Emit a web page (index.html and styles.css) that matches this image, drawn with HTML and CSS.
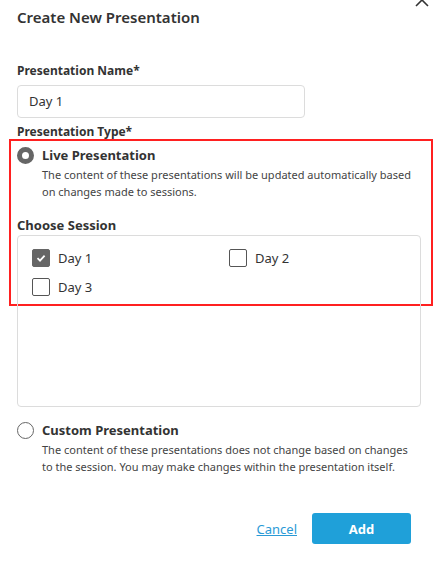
FILE: index.html
```html
<!DOCTYPE html>
<html>
<head>
<meta charset="utf-8">
<link rel="stylesheet" href="styles.css">
</head>
<body>
<div class="modal">
  <button class="close" aria-label="Close">
    <svg width="14" height="14" viewBox="0 0 14 14"><path d="M1 1L13 13M13 1L1 13" stroke="#333" stroke-width="1.6" fill="none"/></svg>
  </button>
  <h1 class="title">Create New Presentation</h1>

  <label class="field-label">Presentation Name*</label>
  <div class="input">Day 1</div>

  <div class="field-label type-label">Presentation Type*</div>

  <div class="highlight">
    <div class="option">
      <span class="radio radio-on"></span>
      <div class="option-body">
        <div class="option-title">Live Presentation</div>
        <div class="option-desc">The content of these presentations will be updated automatically based on changes made to sessions.</div>
      </div>
    </div>
    <div class="session-label">Choose Session</div>
  </div>

  <div class="sessions">
    <label class="check"><span class="box box-on"><svg width="12" height="12" viewBox="0 0 12 12"><path d="M2.5 6.2L5 8.6L9.6 3.6" stroke="#fff" stroke-width="1.8" fill="none"/></svg></span>Day 1</label>
    <label class="check"><span class="box"></span>Day 2</label>
    <label class="check"><span class="box"></span>Day 3</label>
  </div>

  <div class="option custom">
    <span class="radio"></span>
    <div class="option-body">
      <div class="option-title">Custom Presentation</div>
      <div class="option-desc">The content of these presentations does not change based on changes to the session. You may make changes within the presentation itself.</div>
    </div>
  </div>

  <div class="actions">
    <a class="cancel" href="#">Cancel</a>
    <button class="add">Add</button>
  </div>
</div>
<div class="footer-fade"></div>
</body>
</html>
```
FILE: styles.css
```css
html, body {
  margin: 0;
  padding: 0;
  background: #fff;
  font-family: "Noto Sans", "Open Sans", sans-serif;
  color: #333;
  height: 564px;
  overflow: hidden;
}
.modal {
  position: relative;
  padding: 0 17px;
}
.close {
  position: absolute;
  right: 9px;
  top: -7px;
  border: 0;
  background: none;
  padding: 0;
  width: 14px;
  height: 14px;
}
.title {
  margin: 0;
  padding-top: 6px;
  font-size: 15px;
  line-height: 22px;
  font-weight: 600;
  color: #333;
}
.field-label {
  display: block;
  margin-top: 34px;
  font-size: 12px;
  line-height: 18px;
  font-weight: 700;
  color: #333;
}
.input {
  box-sizing: border-box;
  margin-top: 5px;
  width: 288px;
  height: 33px;
  border: 1px solid #dcdcdc;
  border-radius: 4px;
  padding: 0 11px;
  font-size: 13px;
  line-height: 31px;
  color: #333;
}
.type-label {
  margin-top: 5px;
}
.highlight {
  margin: -2px -12px 0 -8px;
  border: 2px solid #ff2020;
  padding: 5px 7px 0 6px;
  height: 167px;
  box-sizing: border-box;
}
.option {
  display: flex;
  gap: 8px;
}
.option-body {
  max-width: 374px;
}
.radio {
  box-sizing: border-box;
  flex: none;
  width: 17px;
  height: 17px;
  border-radius: 50%;
  border: 1px solid #666;
  margin-top: 1px;
}
.radio-on {
  border: 5px solid #666;
}
.option-title {
  font-size: 13px;
  line-height: 19px;
  font-weight: 700;
  color: #333;
}
.option-desc {
  margin-top: 1px;
  font-size: 11px;
  line-height: 17px;
  color: #444;
}
.session-label {
  margin-top: 16px;
  font-size: 13px;
  line-height: 19px;
  font-weight: 700;
  color: #333;
}
.sessions {
  box-sizing: border-box;
  margin-top: -71px;
  height: 172px;
  border: 1px solid #dcdcdc;
  border-radius: 4px;
  padding: 12px 14px;
  display: grid;
  grid-template-columns: 197px 1fr;
  grid-auto-rows: 29px;
  align-content: start;
}
.check {
  display: flex;
  align-items: center;
  gap: 8px;
  font-size: 13px;
  color: #333;
  height: 19px;
}
.box {
  box-sizing: border-box;
  width: 18px;
  height: 18px;
  border: 1px solid #555;
  border-radius: 2px;
  display: flex;
  align-items: center;
  justify-content: center;
}
.box-on {
  background: #666;
  border-color: #666;
}
.custom {
  margin-top: 14px;
}
.actions {
  display: flex;
  justify-content: flex-end;
  align-items: center;
  gap: 15px;
  margin-top: 38px;
  padding-right: 10px;
}
.cancel {
  font-size: 13px;
  color: #2a9ad6;
  text-decoration: underline;
}
.add {
  width: 99px;
  height: 31px;
  border: 0;
  border-radius: 3px;
  background: #1fa0d9;
  color: #fff;
  font-family: inherit;
  font-size: 13px;
  font-weight: 700;
}
.footer-fade {
  position: absolute;
  left: 0;
  right: 0;
  bottom: 0;
  height: 26px;
  background: linear-gradient(#fff, #efefef);
  z-index: -1;
}
```
